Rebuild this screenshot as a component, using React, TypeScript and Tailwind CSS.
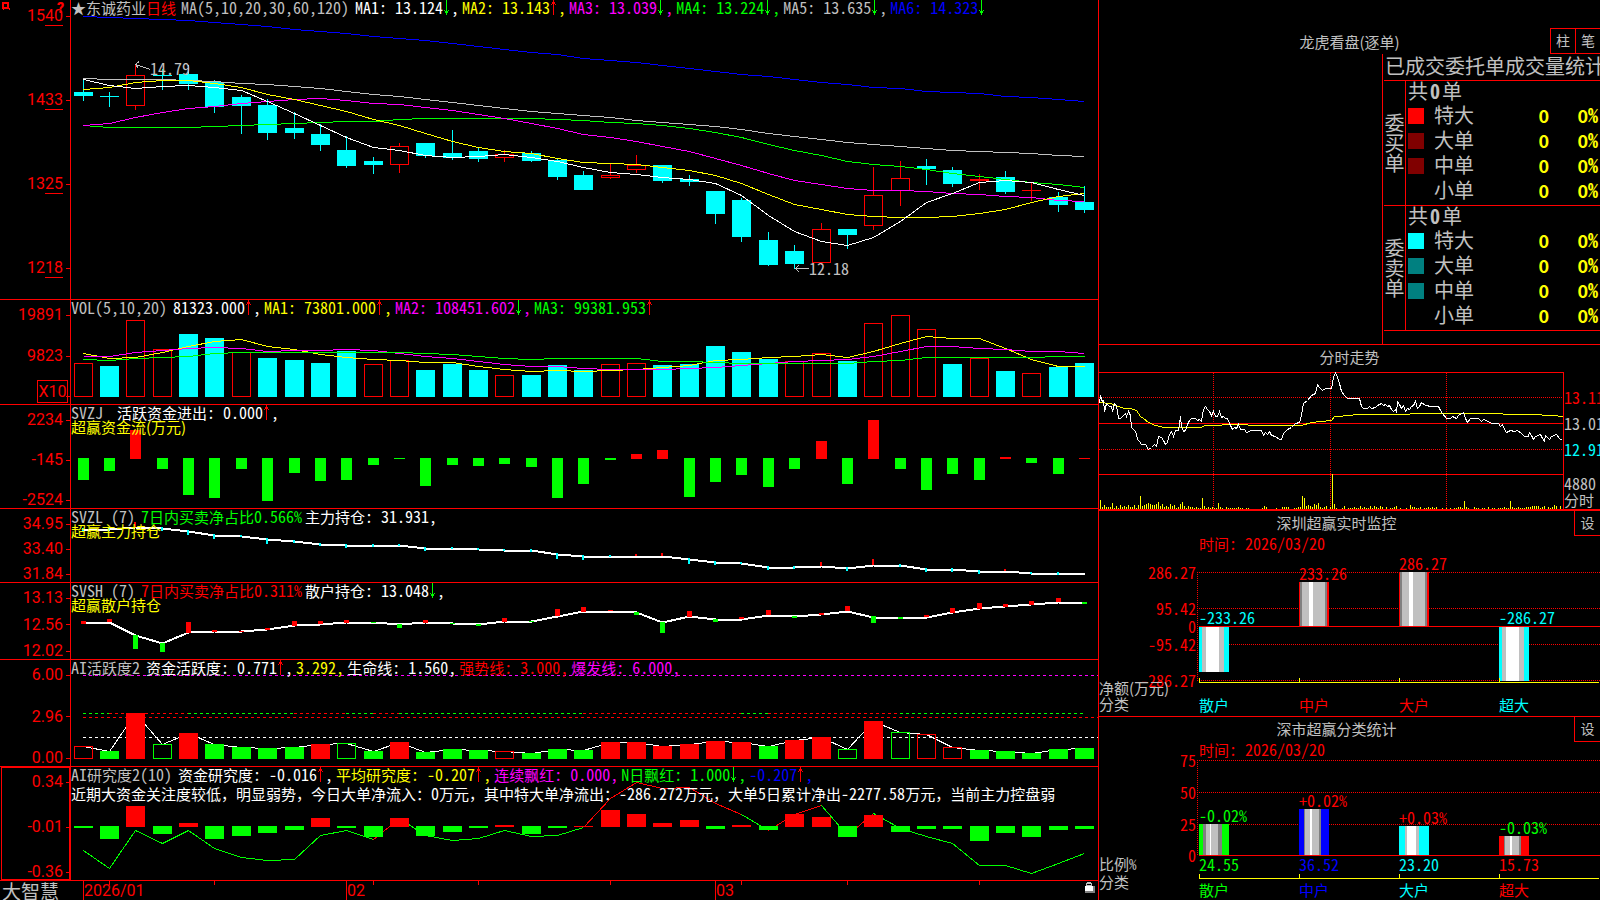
import { Fragment, type ReactNode } from "react";

const RED = "#ff0000";
const GREEN = "#00ff00";
const CYAN = "#00ffff";
const YELLOW = "#ffff00";
const MAGENTA = "#ff00ff";
const BLUE = "#0000ff";
const WHITE = "#ffffff";
const SILVER = "#c0c0c0";
const GRAY = "#808080";

/* ---------- text ---------- */

/* Latin runs use the half-width forms of the CJK font, so that digits stay in fixed cells. */
function Mixed({ text }: { text: string }) {
  return (
    <>
      {text.split(/([\x20-\x7e]+)/).map((part, i) =>
        i % 2 ? (
          <span key={i} className="text-[16px] [font-feature-settings:'hwid']">
            {part}
          </span>
        ) : (
          <Fragment key={i}>{part}</Fragment>
        ),
      )}
    </>
  );
}

function Arrow({ up }: { up: boolean }) {
  return (
    <svg viewBox="0 0 8 15" className="h-[15px] w-[8px] shrink-0" shapeRendering="crispEdges" aria-hidden="true">
      {up ? (
        <path d="M3 0h1v15h-1zM2 2h3v2h-3zM1 4h1v1h-1zM5 4h1v1h-1z" fill={RED} />
      ) : (
        <path d="M3 0h1v15h-1zM2 11h3v2h-3zM1 10h1v1h-1zM5 10h1v1h-1z" fill={GREEN} />
      )}
    </svg>
  );
}

type Reading = { text: string; tone: string; trend?: "up" | "down"; comma?: boolean };

function Readings({ name, items }: { name: ReactNode; items: Reading[] }) {
  return (
    <div className="flex h-[15px] whitespace-pre leading-[15px]">
      <span className="mr-[6px] flex text-[#c0c0c0]">{name}</span>
      {items.map((it, i) => (
        <span key={i} className={`mr-[3px] flex ${it.tone}`}>
          <span>
            <Mixed text={it.text} />
          </span>
          {it.trend && <Arrow up={it.trend === "up"} />}
          {it.comma !== false && <span className="text-[16px] [font-feature-settings:'hwid']">,</span>}
        </span>
      ))}
    </div>
  );
}

/* ---------- chart helpers ---------- */

const COUNT = 39;
const cx = (i: number) => 83 + Math.floor(i * 26.35 + 0.2);
const main = (v: number) => Math.round(v / 3);
const mid = (v: number) => 290 + Math.round(v / 3);
const low = (v: number) => 580 + Math.round(v / 3);

type Scale = (v: number) => number;

function Line({ ys, scale, color, width = 1, start = 0 }: { ys: number[]; scale: Scale; color: string; width?: number; start?: number }) {
  return (
    <polyline
      fill="none"
      stroke={color}
      strokeWidth={width}
      points={ys.map((y, i) => `${cx(i + start) + 0.5},${scale(y) + 0.5}`).join(" ")}
    />
  );
}

function Bar({ i, top, bottom, color, hollow, width = 19 }: { i: number; top: number; bottom: number; color: string; hollow?: boolean; width?: number }) {
  const x = cx(i) - (width - 1) / 2;
  const h = Math.max(1, bottom - top);
  return hollow && h > 2 ? (
    <rect x={x + 0.5} y={top + 0.5} width={width - 1} height={h - 1} fill="none" stroke={color} />
  ) : (
    <rect x={x} y={top} width={width} height={h} fill={color} />
  );
}

const fill = (n: number, v: number) => Array<number>(n).fill(v);

/* high, body top, body bottom, low, rising */
const candles: [number, number, number, number, number][] = [
  [236, 276, 288, 303, 0], [276, 288, 290, 321, 0], [192, 225, 318, 330, 1], [207, 225, 228, 270, 0],
  [195, 222, 252, 270, 0], [240, 246, 321, 339, 0], [285, 291, 318, 402, 0], [297, 315, 399, 420, 0],
  [337, 384, 399, 417, 0], [373, 402, 435, 453, 0], [409, 450, 498, 504, 0], [471, 483, 495, 522, 0],
  [429, 438, 495, 519, 1], [429, 429, 468, 474, 0], [390, 459, 474, 480, 0], [444, 453, 477, 486, 0],
  [450, 462, 474, 486, 1], [453, 459, 483, 486, 0], [477, 480, 531, 540, 0], [513, 525, 570, 570, 0],
  [491, 525, 534, 537, 1], [465, 495, 510, 519, 1], [495, 495, 543, 549, 0], [525, 537, 546, 558, 0],
  [573, 573, 642, 672, 0], [594, 600, 711, 726, 0], [696, 720, 795, 798, 0], [735, 753, 792, 807, 0],
  [669, 687, 789, 795, 1], [687, 687, 705, 747, 0], [501, 585, 678, 690, 1], [483, 534, 573, 618, 1],
  [477, 498, 507, 555, 0], [501, 510, 552, 561, 0], [522, 537, 543, 570, 1], [513, 531, 576, 582, 0],
  [549, 570, 573, 603, 1], [576, 591, 615, 636, 0], [558, 606, 630, 639, 0],
];

const ma5 = [237, 256, 263, 259, 256, 262, 269, 302, 339, 374, 410, 442, 451, 466, 472, 468, 463, 472, 484, 502, 515, 521, 531, 536, 549, 585, 645, 692, 724, 736, 711, 662, 605, 578, 545, 541, 547, 566, 586];
const ma10 = [268, 262, 247, 240, 240, 250, 262, 281, 298, 314, 334, 356, 376, 400, 424, 440, 454, 460, 475, 487, 490, 491, 502, 509, 526, 550, 583, 612, 628, 643, 649, 652, 650, 648, 640, 627, 605, 587, 580];
const ma20 = [375, 368, 352, 336, 323, 317, 309, 303, 296, 295, 299, 308, 313, 321, 331, 342, 355, 368, 383, 402, 412, 424, 439, 454, 474, 494, 519, 539, 553, 565, 571, 571, 574, 578, 583, 588, 592, 600, 604];
const ma30 = [376, 380, 382, 382, 382, 379, 376, 373, 370, 365, 364, 364, 358, 355, 355, 355, 355, 355, 356, 361, 365, 370, 376, 385, 397, 412, 433, 451, 466, 482, 493, 499, 508, 519, 529, 538, 546, 551, 562];
const ma60 = [235, 236, 236, 238, 239, 243, 248, 253, 258, 265, 274, 283, 289, 298, 307, 316, 325, 332, 339, 346, 352, 359, 365, 372, 377, 386, 398, 409, 418, 427, 433, 438, 445, 450, 454, 457, 460, 464, 467];
const ma120 = [49, 52, 55, 58, 61, 67, 72, 77, 86, 92, 100, 109, 114, 121, 130, 137, 147, 155, 163, 173, 181, 187, 196, 205, 214, 223, 229, 238, 247, 253, 260, 265, 272, 277, 280, 287, 292, 297, 304];

const volume = [219, 228, 90, 177, 132, 144, 187, 204, 210, 219, 183, 222, 210, 240, 222, 240, 255, 255, 225, 240, 222, 219, 225, 222, 168, 186, 207, 213, 189, 213, 99, 75, 117, 222, 204, 243, 249, 231, 219];
const volumeUp = new Set([0, 2, 3, 6, 11, 12, 16, 20, 21, 27, 28, 30, 31, 32, 34, 36]);
const vol5 = [190, 203, 200, 187, 169, 154, 148, 169, 178, 193, 202, 208, 211, 217, 217, 229, 236, 244, 241, 244, 241, 236, 231, 225, 211, 206, 202, 199, 193, 202, 184, 158, 139, 145, 145, 173, 208, 229, 229];
const vol10 = [197, 199, 185, 181, 175, 172, 175, 184, 181, 181, 178, 179, 190, 197, 205, 214, 223, 227, 229, 233, 236, 236, 236, 235, 230, 224, 218, 214, 211, 208, 197, 182, 169, 169, 173, 178, 184, 184, 188];
const vol20 = [208, 211, 205, 202, 197, 190, ...fill(7, 187), 189, 191, 197, 204, 206, 205, 205, 205, 205, 214, 214, 217, ...fill(5, 220), 214, 209, ...fill(5, 202), 199, 199];

const flow = [570, 543, 420, 537, 615, 624, 537, 633, 549, 573, 570, 525, 507, 588, 525, 528, 522, 531, 624, 582, 510, 492, 480, 621, 576, 555, 591, 537, 453, 582, 390, 537, 600, 552, 570, 501, 519, 552, 504];

const mainHold = [717, 717, 712, 713, 723, 736, 737, 748, 754, 761, 766, 766, 766, 773, 775, 778, 779, 781, 793, 798, 798, 798, 797, 808, 815, 820, 831, 831, 827, 834, 825, 825, 836, 837, 843, 843, 848, 849, 849];
const mainMarks = [6, 6, -12, 8, 12, 12, 4, 14, 5, 7, 9, 5, 2, 9, 4, 2, 4, 5, 14, 12, 3, -3, -6, 14, 8, 4, 10, 6, -8, 9, -15, 6, 10, 9, 9, -2, 2, 5, 0];

const retailHold = [128, 125, 165, 189, 157, 154, 154, 148, 136, 131, 126, 127, 132, 127, 130, 133, 124, 123, 108, 94, 92, 97, 127, 109, 117, 116, 104, 108, 103, 93, 110, 111, 110, 97, 85, 79, 73, 65, 66];
const retailMarks: [number, number, number][] = [
  [123, 132, 1], [117, 126, 1], [165, 207, 0], [189, 216, 0], [126, 159, 1], [150, 156, 1], [153, 156, 1], [144, 150, 1],
  [123, 138, 1], [123, 132, 1], [120, 129, 1], [126, 129, 0], [132, 144, 0], [120, 129, 1], [129, 132, 0], [132, 138, 0],
  [114, 126, 1], [123, 126, 0], [87, 108, 1], [81, 96, 1], [90, 93, 1], [96, 105, 0], [126, 159, 0], [93, 111, 1],
  [117, 126, 0], [111, 117, 1], [90, 105, 1], [108, 114, 0], [99, 105, 1], [78, 93, 1], [108, 129, 0], [111, 117, 0],
  [105, 111, 1], [84, 99, 1], [69, 87, 1], [72, 81, 1], [63, 75, 1], [54, 66, 1], [66, 72, 0],
];

const active = [499, 513, 399, 492, 459, 492, 501, 504, 501, 492, 490, 513, 486, 516, 507, 510, 514, 519, 507, 510, 486, 486, 498, 492, 483, 486, 498, 480, 471, 508, 423, 457, 463, 502, 510, 513, 519, 507, 504];
const activeUp = new Set([0, 2, 4, 9, 12, 16, 20, 21, 22, 23, 24, 25, 27, 28, 30, 32, 33]);
const activeHollow = new Set([0, 3, 10, 16, 29, 31, 32, 33]);

const study = [744, 777, 678, 762, 729, 777, 768, 759, 750, 714, 744, 771, 714, 768, 756, 744, 735, 762, 744, 738, 690, 702, 729, 720, 747, 735, 750, 702, 711, 771, 705, 756, 747, 747, 783, 759, 771, 750, 747];
const studyUp = new Set([2, 4, 9, 12, 16, 19, 20, 21, 22, 23, 25, 27, 28, 30]);
const studyLine = [810, 865, 751, 788, 751, 804, 831, 841, 837, 764, 751, 778, 714, 764, 781, 775, 751, 768, 764, 742, 655, 606, 624, 621, 668, 702, 750, 703, 676, 764, 700, 745, 768, 790, 856, 856, 878, 850, 820];

/* ---------- left side panes ---------- */

function AxisLabel({ children }: { children: ReactNode }) {
  return (
    <div className="flex h-4 items-center justify-end gap-[3px] leading-4">
      <span>{children}</span>
      <span className="h-px w-1 bg-[#f00]" />
    </div>
  );
}

function Pane({ box, axis, axisClass, header, children }: { box: string; axis: ReactNode; axisClass: string; header: ReactNode; children: ReactNode }) {
  return (
    <section className="grid min-h-0 grid-cols-[71px_minmax(0,1fr)] grid-rows-[minmax(0,1fr)] border-b border-[#f00]">
      <div className={`relative flex flex-col border-r border-[#f00] font-[Roboto,sans-serif] text-[16px] text-[#f00] ${axisClass}`}>{axis}</div>
      <div className="grid grid-cols-[minmax(0,1fr)] grid-rows-[minmax(0,1fr)]">
        <svg className="col-start-1 row-start-1 h-full w-full" viewBox={box} preserveAspectRatio="none" shapeRendering="crispEdges" aria-hidden="true">
          {children}
        </svg>
        <div className="z-10 col-start-1 row-start-1">{header}</div>
      </div>
    </section>
  );
}

function PriceLabel({ head, tail }: { head: string; tail: string }) {
  return (
    <AxisLabel>
      {head}
      <span className="border-b border-[#f00]">{tail}</span>
    </AxisLabel>
  );
}

function PricePane() {
  const seg = (n: string, v: string, tone: string, trend: "up" | "down", comma = true): Reading => ({ text: `${n}: ${v}`, tone, trend, comma });
  return (
    <Pane
      box="71 0 1027 299"
      axisClass="justify-between pt-[8px] pb-[23px]"
      axis={
        <>
          <svg className="absolute top-[2px] left-[2px] h-[8px] w-[8px]" viewBox="0 0 8 8" shapeRendering="crispEdges" aria-hidden="true">
            <path d="M0 0h7v7h-7zM2 2v3h3v-3z" fill={RED} fillRule="evenodd" />
            <path d="M1 7h1v1h-1zM6 6h2v2h-1v-1h-1z" fill={RED} />
          </svg>
          <span className="absolute top-0 left-[57px] text-[14px] leading-4 font-black">?</span>
          <PriceLabel head="15" tail="40" />
          <PriceLabel head="14" tail="33" />
          <PriceLabel head="13" tail="25" />
          <PriceLabel head="12" tail="18" />
        </>
      }
      header={
        <Readings
          name={
            <>
              <span>★东诚药业</span>
              <span className="mr-[5px] text-[#f00]">日线</span>
              <Mixed text="MA(5,10,20,30,60,120)" />
            </>
          }
          items={[
            seg("MA1", "13.124", "text-white", "down"),
            seg("MA2", "13.143", "text-[#ff0]", "up"),
            seg("MA3", "13.039", "text-[#f0f]", "down"),
            seg("MA4", "13.224", "text-[#0f0]", "down"),
            seg("MA5", "13.635", "text-[#c0c0c0]", "down"),
            seg("MA6", "14.323", "text-[#00f]", "down", false),
          ]}
        />
      }
    >
      {candles.map(([hi, top, bottom, lo, up], i) => {
        const color = up ? RED : CYAN;
        return (
          <g key={i}>
            <rect x={cx(i)} y={main(hi)} width={1} height={main(top) - main(hi)} fill={color} />
            <rect x={cx(i)} y={main(bottom)} width={1} height={main(lo) - main(bottom)} fill={color} />
            <Bar i={i} top={main(top)} bottom={main(bottom)} color={color} hollow={!!up} />
          </g>
        );
      })}
      <Line ys={ma120} scale={main} color={BLUE} />
      <Line ys={ma60} scale={main} color={SILVER} />
      <Line ys={ma30} scale={main} color={GREEN} />
      <Line ys={ma20} scale={main} color={MAGENTA} />
      <Line ys={ma10} scale={main} color={YELLOW} />
      <Line ys={ma5} scale={main} color={WHITE} />
      <g fill="none" stroke={SILVER}>
        <path d="M150.5 69.5L135.5 64.5M139 61.5L135.5 64.5L138.5 68.5" />
        <path d="M809 268.5H795M799 265L795.5 268.5L799 272" />
      </g>
      <g fill={SILVER} fontSize={16} className="[font-feature-settings:'hwid']">
        <text x={150} y={75}>14.79</text>
        <text x={809} y={275}>12.18</text>
      </g>
    </Pane>
  );
}

function VolumePane() {
  return (
    <Pane
      box="71 300 1027 104"
      axisClass="pt-[7px]"
      axis={
        <>
          <AxisLabel>19891</AxisLabel>
          <div className="mt-[25px]">
            <AxisLabel>9823</AxisLabel>
          </div>
          <div className="mt-4 mr-[2px] flex h-[23px] w-[31px] items-center justify-center self-end border border-[#f00]">X10</div>
          <span className="absolute right-0 bottom-[7px] h-px w-1 bg-[#f00]" />
        </>
      }
      header={
        <Readings
          name={<Mixed text="VOL(5,10,20)" />}
          items={[
            { text: "81323.000", tone: "text-white", trend: "up" },
            { text: "MA1: 73801.000", tone: "text-[#ff0]", trend: "up" },
            { text: "MA2: 108451.602", tone: "text-[#f0f]", trend: "down" },
            { text: "MA3: 99381.953", tone: "text-[#0f0]", trend: "up", comma: false },
          ]}
        />
      }
    >
      {volume.map((v, i) => (
        <Bar key={i} i={i} top={mid(v)} bottom={397} color={volumeUp.has(i) ? RED : CYAN} hollow={volumeUp.has(i)} />
      ))}
      <Line ys={vol5} scale={mid} color={YELLOW} />
      <Line ys={vol10} scale={mid} color={MAGENTA} />
      <Line ys={vol20} scale={mid} color={GREEN} />
    </Pane>
  );
}

function Caption({ children }: { children: string }) {
  return (
    <div className="-mt-px h-[15px] leading-[15px] text-[#ff0]">
      {children}
    </div>
  );
}

function FlowPane() {
  return (
    <Pane
      box="71 405 1027 103"
      axisClass="justify-between pt-[7px]"
      axis={
        <>
          <AxisLabel>2234</AxisLabel>
          <AxisLabel>-145</AxisLabel>
          <AxisLabel>-2524</AxisLabel>
        </>
      }
      header={
        <>
          <Readings name={<Mixed text="SVZJ " />} items={[{ text: "活跃资金进出: 0.000", tone: "text-white", trend: "up" }]} />
          <Caption>超赢资金流(万元)</Caption>
        </>
      }
    >
      {flow.map((v, i) =>
        v > 504 ? (
          <Bar key={i} i={i} top={458} bottom={mid(v)} color={GREEN} width={11} />
        ) : (
          <Bar key={i} i={i} top={mid(v)} bottom={459} color={RED} width={11} />
        ),
      )}
    </Pane>
  );
}

function MainHoldPane() {
  return (
    <Pane
      box="71 509 1027 73"
      axisClass="justify-between pt-[7px]"
      axis={
        <>
          <AxisLabel>34.95</AxisLabel>
          <AxisLabel>33.40</AxisLabel>
          <AxisLabel>31.84</AxisLabel>
        </>
      }
      header={
        <>
          <Readings
            name={<Mixed text="SVZL (7)" />}
            items={[
              { text: "7日内买卖净占比0.566%", tone: "text-[#0f0]", comma: false },
              { text: "主力持仓: 31.931", tone: "text-white" },
            ]}
          />
          <Caption>超赢主力持仓</Caption>
        </>
      }
    >
      <Line ys={mainHold} scale={mid} color={WHITE} width={2} />
      {mainMarks.map((m, i) => {
        const y = mid(mainHold[i]) - 1;
        const h = Math.round(Math.abs(m) / 3) + 1;
        return m ? <rect key={i} x={cx(i) - 1} y={m > 0 ? y : y - h + 1} width={2} height={h} fill={m > 0 ? CYAN : RED} /> : null;
      })}
    </Pane>
  );
}

function RetailHoldPane() {
  return (
    <Pane
      box="71 583 1027 76"
      axisClass="justify-between pt-[7px]"
      axis={
        <>
          <AxisLabel>13.13</AxisLabel>
          <AxisLabel>12.56</AxisLabel>
          <AxisLabel>12.02</AxisLabel>
        </>
      }
      header={
        <>
          <Readings
            name={<Mixed text="SVSH (7)" />}
            items={[
              { text: "7日内买卖净占比0.311%", tone: "text-[#f00]", comma: false },
              { text: "散户持仓: 13.048", tone: "text-white", trend: "down" },
            ]}
          />
          <Caption>超赢散户持仓</Caption>
        </>
      }
    >
      <Line ys={retailHold} scale={low} color={WHITE} width={2} />
      {retailMarks.map(([top, bottom, up], i) => (
        <Bar key={i} i={i} top={low(top)} bottom={low(bottom)} color={up ? RED : GREEN} width={5} />
      ))}
    </Pane>
  );
}

function ActivePane() {
  const redRuns: [number, number][] = [[1, 4], [8, 10], [11, 12], [19, 25], [26, 31]];
  const greenRuns: [number, number][] = [[0, 1], [4, 8], [10, 11], [12, 19], [25, 26], [31, 38]];
  return (
    <Pane
      box="71 660 1027 106"
      axisClass="justify-between pt-[7px]"
      axis={
        <>
          <AxisLabel>6.00</AxisLabel>
          <AxisLabel>2.96</AxisLabel>
          <AxisLabel>0.00</AxisLabel>
        </>
      }
      header={
        <Readings
          name={
            <span>
              <Mixed text="AI活跃度2" />
            </span>
          }
          items={[
            { text: "资金活跃度: 0.771", tone: "text-white", trend: "up" },
            { text: "3.292", tone: "text-[#ff0]" },
            { text: "生命线: 1.560", tone: "text-white" },
            { text: "强势线: 3.000", tone: "text-[#f00]" },
            { text: "爆发线: 6.000", tone: "text-[#f0f]" },
          ]}
        />
      }
    >
      <g strokeDasharray="3 3">
        <path d="M83 675.5H1098" stroke={MAGENTA} />
        <path d="M83 717.5H1098" stroke={RED} />
        <path d="M83 737.5H1098" stroke={WHITE} />
        {redRuns.map(([a, b]) => (
          <path key={a} d={`M${cx(a)} 713.5H${cx(b)}`} stroke={RED} />
        ))}
        {greenRuns.map(([a, b]) => (
          <path key={a} d={`M${cx(a)} 713.5H${cx(b)}`} stroke={GREEN} />
        ))}
      </g>
      <Line ys={active} scale={low} color={WHITE} />
      {active.map((v, i) => (
        <Bar key={i} i={i} top={low(v)} bottom={759} color={activeUp.has(i) ? RED : GREEN} hollow={activeHollow.has(i)} />
      ))}
    </Pane>
  );
}

function StudyPane() {
  const runs: [number, number, string][] = [
    [0, 11, GREEN], [11, 12, RED], [12, 19, GREEN], [19, 25, RED], [25, 26, GREEN],
    [26, 28, RED], [28, 29, GREEN], [29, 30, RED], [30, COUNT - 1, GREEN],
  ];
  return (
    <Pane
      box="71 767 1027 113"
      axisClass="justify-between pt-[7px] ml-px ring-1 ring-inset ring-[#f00]"
      axis={
        <>
          <AxisLabel>0.34</AxisLabel>
          <AxisLabel>-0.01</AxisLabel>
          <AxisLabel>-0.36</AxisLabel>
        </>
      }
      header={
        <>
          <Readings
            name={
              <span>
                <Mixed text="AI研究度2(10)" />
              </span>
            }
            items={[
              { text: "资金研究度: -0.016", tone: "text-white", trend: "up" },
              { text: "平均研究度: -0.207", tone: "text-[#ff0]", trend: "up" },
              { text: "连续飘红: 0.000", tone: "text-[#f0f]" },
              { text: "N日飘红: 1.000", tone: "text-[#0f0]", trend: "down" },
              { text: "-0.207", tone: "text-[#00f]", trend: "up" },
            ]}
          />
          <p className="mt-1 h-[15px] leading-[15px] whitespace-nowrap text-white">
            <Mixed text="近期大资金关注度较低，明显弱势，今日大单净流入：0万元，其中特大单净流出：-286.272万元，大单5日累计净出-2277.58万元，当前主力控盘弱" />
          </p>
        </>
      }
    >
      {runs.map(([a, b, color]) => (
        <Line key={a} ys={studyLine.slice(a, b + 1)} start={a} scale={low} color={color} />
      ))}
      {study.map((v, i) =>
        studyUp.has(i) ? (
          <Bar key={i} i={i} top={low(v)} bottom={827} color={RED} />
        ) : (
          <Bar key={i} i={i} top={826} bottom={low(v)} color={GREEN} />
        ),
      )}
    </Pane>
  );
}

function TimeAxis() {
  return (
    <footer className="grid min-h-0 grid-cols-[71px_minmax(0,1fr)]">
      <span className="pl-[2px] text-[19px] leading-[19px] whitespace-nowrap text-[#c0c0c0]">大智慧</span>
      <svg className="h-full w-full" viewBox="71 881 1027 19" preserveAspectRatio="none" shapeRendering="crispEdges" role="img" aria-label="日期">
        {[0, 10, 24].map((i) => (
          <rect key={i} x={cx(i)} y={881} width={1} height={19} fill={RED} />
        ))}
        {[1, 5, 11, 15, 20, 25, 29, 34].map((i) => (
          <rect key={i} x={cx(i)} y={881} width={1} height={4} fill={RED} />
        ))}
        <g fill={RED} className="font-[Roboto,sans-serif] text-[16px]">
          <text x={84} y={896}>2026/01</text>
          <text x={347} y={896}>02</text>
          <text x={716} y={896}>03</text>
        </g>
        <path d="M1086 883h1v-1h4v1h1v3h-6z" fill={SILVER} />
        <path d="M1087 884h4v1h-4z" fill="#000" />
        <path d="M1085 886h10v7h-10z" fill={GRAY} />
        <path d="M1085 886h8v5h-8z" fill={WHITE} />
      </svg>
    </footer>
  );
}

/* ---------- right side ---------- */

type Side = { side: string; swatches: string[] };

const sides: Side[] = [
  { side: "委买单", swatches: ["bg-[#f00]", "bg-[#800000]", "bg-[#800000]", ""] },
  { side: "委卖单", swatches: ["bg-[#0ff]", "bg-[#008080]", "bg-[#008080]", ""] },
];
const sizes = ["特大", "大单", "中单", "小单"];

function OrderStats() {
  return (
    <section className="flex min-h-0 flex-col overflow-hidden border-b border-[#f00] text-[#c0c0c0]">
      <header className="grid h-[54px] shrink-0 grid-cols-[1fr_auto_1fr] items-end">
        <h2 className="col-start-2 mb-[5px] h-[15px] leading-[15px]">龙虎看盘(逐单)</h2>
        <div className="flex justify-end">
          <button type="button" className="h-[26px] w-[25px] border border-r-0 border-[#f00] pb-[2px] text-[14px]">柱</button>
          <button type="button" className="h-[26px] w-[25px] border border-r-0 border-[#f00] pb-[2px] text-[14px]">笔</button>
        </div>
      </header>
      <div className="flex min-h-0 flex-1 justify-end">
        <div className="w-[218px] overflow-hidden border-l border-[#f00] text-[20px] leading-[20px]">
          <h3 className="h-[26px] pt-[2px] pl-[2px] leading-[20px] whitespace-nowrap">已成交委托单成交量统计</h3>
          <table className="ml-px w-[216px] table-fixed border-separate border-spacing-0 border-b border-[#f00]">
            <colgroup>
              <col className="w-[22px]" />
              <col className="w-[28px]" />
              <col className="w-[42px]" />
              <col className="w-[75px]" />
              <col className="w-[49px]" />
            </colgroup>
            {sides.map(({ side, swatches }) => (
              <tbody key={side}>
                <tr>
                  <th rowSpan={5} scope="rowgroup" className="border-t border-r border-[#f00] p-0 font-normal">
                    {[...side].map((c) => (
                      <span key={c} className="block">{c}</span>
                    ))}
                  </th>
                  <td colSpan={4} className="h-[25px] border-t border-[#f00] p-0 pl-[2px] align-top">
                    共<span className="mx-[2px] font-bold [font-feature-settings:'hwid']">0</span>单
                  </td>
                </tr>
                {sizes.map((s, i) => (
                  <tr key={s} className="align-top">
                    <td className="h-[25px] p-0 pt-[3px] pl-[2px]">
                      <span className={`block size-4 ${swatches[i]}`} />
                    </td>
                    <td className="p-0 whitespace-nowrap">{s}</td>
                    <td className="p-0 pr-[2px] text-right text-[18px] font-bold text-[#ff0]">0</td>
                    <td className="p-0 pr-[2px] text-right font-bold text-[#ff0]">
                      <span className="text-[18px]">0</span>
                      <span className="text-[20px] [font-feature-settings:'hwid']">%</span>
                    </td>
                  </tr>
                ))}
              </tbody>
            ))}
          </table>
        </div>
      </div>
    </section>
  );
}

const priceTrace =
  "3,190 7,166 10,178 13,184 16,180 19,214 25,190 34,200 40,200 43,214 49,190 55,196 61,236 67,236 73,228 82,220 85,230 91,214 97,226 100,262 109,272 115,280 118,298 124,304 130,314 142,314 151,328 160,322 169,314 175,318 181,290 190,292 196,300 202,312 208,308 214,284 220,274 226,290 232,270 241,270 247,230 250,258 256,274 262,270 268,254 274,240 280,236 292,236 298,242 304,238 310,244 316,208 322,198 328,208 334,214 340,226 346,214 352,230 358,228 364,214 370,232 376,230 382,236 388,236 394,250 403,268 409,262 415,264 421,252 427,268 439,268 445,276 460,270 478,272 490,270 496,286 502,276 508,282 514,274 520,286 532,290 544,298 550,298 556,280 568,268 580,262 592,250 604,248 610,226 616,190 628,180 640,166 652,160 658,132 664,142 672,152 682,146 700,146 706,112 712,98 718,112 724,130 730,154 740,166 748,176 784,176 790,198 796,206 808,206 814,200 820,204 832,202 838,196 850,190 856,196 862,192 868,200 874,196 880,208 886,214 892,208 895,216 898,184 904,192 910,206 916,196 922,214 928,204 934,208 940,198 946,196 952,184 958,206 964,198 970,186 982,196 1000,200 1020,200 1026,210 1034,220 1044,236 1056,236 1062,230 1076,236 1082,226 1096,216 1102,236 1108,246 1116,236 1140,236 1150,244 1156,238 1170,244 1180,250 1200,250 1208,258 1214,252 1218,268 1226,276 1238,270 1250,274 1258,270 1270,280 1278,290 1290,288 1294,276 1300,286 1306,298 1312,288 1326,284 1332,296 1338,304 1342,286 1354,298 1360,290 1376,284 1384,296 1394,302";
const averageTrace =
  "3,188 36,190 60,198 78,204 96,206 115,212 126,228 136,236 150,246 172,256 200,262 310,262 320,257 366,256 376,253 440,253 460,257 610,257 640,248 700,241 708,228 760,226 770,223 930,223 940,220 1210,220 1220,223 1300,224 1360,227 1396,230";
const at = (trace: string) =>
  trace
    .split(" ")
    .map((p) => {
      const [x, y] = p.split(",").map(Number);
      return `${Math.floor(1098 + x / 3) + 0.5},${Math.floor(340 + y / 3) + 0.5}`;
    })
    .join(" ");

const ticks = [
  9, 2, 4, 2, 2, 2, 6, 1, 3, 1, 4, 2, 3, 2, 4, 2, 2, 4, 1, 4, 13, 3, 4, 5, 6, 5, 4, 4, 5, 7, 3, 5, 2, 3, 2, 5, 3, 4, 1, 2,
  5, 7, 3, 1, 3, 2, 2, 1, 2, 1, 1, 11, 3, 1, 2, 1, 2, 1, 1, 6, 2, 1, 0, 2, 1, 1, 1, 1, 1, 2, 1, 1, 0, 1, 1, 0, 0, 0, 0, 0,
  0, 1, 3, 2, 0, 0, 0, 0, 1, 0, 0, 2, 2, 2, 2, 0, 0, 1, 1, 2, 2, 13, 11, 3, 4, 3, 2, 5, 4, 6, 2, 1, 2, 3, 0, 2, 35, 5, 1, 0,
  0, 1, 3, 0, 1, 1, 1, 2, 1, 1, 3, 1, 2, 1, 1, 3, 1, 3, 2, 1, 3, 2, 0, 2, 0, 1, 1, 2, 3, 0, 1, 0, 0, 1, 0, 4, 2, 2, 1, 1,
  2, 0, 1, 1, 2, 1, 2, 1, 2, 0, 0, 1, 0, 1, 0, 1, 0, 1, 1, 2, 2, 1, 8, 2, 1, 0, 0, 2, 1, 1, 0, 1, 1, 0, 2, 0, 1, 1, 0, 1,
  1, 1, 2, 1, 1, 8, 2, 1, 1, 2, 1, 1, 1, 2, 2, 2, 3, 3, 3, 3, 1, 2, 3, 0, 2, 1, 2, 4, 3, 0, 3,
];

function Intraday() {
  return (
    <section className="flex min-h-0 flex-col border-b-2 border-[#f00]">
      <h2 className="h-[27px] shrink-0 pt-[4px] text-center leading-[15px] text-[#c0c0c0]">分时走势</h2>
      <svg className="min-h-0 w-full flex-1" viewBox="1099 372 501 137" preserveAspectRatio="none" shapeRendering="crispEdges" role="img" aria-label="分时走势">
        <path d="M1099 372.5H1563.5V509M1099 423.5H1563M1099 474.5H1563" fill="none" stroke={RED} />
        <path d="M1099 397.5H1563M1099 449.5H1563M1213.5 373V509M1330.5 373V509M1446.5 373V509" fill="none" stroke={RED} strokeDasharray="1 1" />
        {ticks.map((h, i) => (h ? <rect key={i} x={1100 + i * 2} y={509 - h} width={1} height={h} fill={YELLOW} /> : null))}
        <polyline points={at(averageTrace)} fill="none" stroke={YELLOW} />
        <polyline points={at(priceTrace)} fill="none" stroke={WHITE} />
        <g fontSize={16} className="[font-feature-settings:'hwid']">
          <text x={1564} y={404} fill={RED}>13.11</text>
          <text x={1564} y={430} fill={SILVER}>13.01</text>
          <text x={1564} y={456} fill={CYAN}>12.91</text>
          <text x={1564} y={490} fill={SILVER}>4880</text>
        </g>
        <text x={1564} y={506} fontSize={15} fill={SILVER}>分时</text>
      </svg>
    </section>
  );
}

type Column = { label: string; tone: string; top: number; bottom: number; stripes: [number, string][]; value: string; valueTone: string; valueY: number };

function Columns({ columns, labelY }: { columns: Column[]; labelY: number }) {
  return (
    <>
      {columns.map((c, i) => {
        let x = 1199 + i * 100;
        return (
          <g key={c.label}>
            {c.stripes.map(([w, color], k) => {
              const r = <rect key={k} x={x} y={c.top} width={w} height={c.bottom - c.top} fill={color} />;
              x += w;
              return r;
            })}
            <text x={1199 + i * 100} y={c.valueY} fontSize={16} fill={c.valueTone} className="[font-feature-settings:'hwid']">
              {c.value}
            </text>
            <text x={1199 + i * 100} y={labelY} fontSize={15} fill={c.tone}>
              {c.label}
            </text>
          </g>
        );
      })}
    </>
  );
}

function Monitor({ title, box, last, children }: { title: string; box: string; last?: boolean; children: ReactNode }) {
  return (
    <section className={`flex min-h-0 flex-col ${last ? "" : "border-b border-[#f00]"}`}>
      <header className="flex h-[25px] shrink-0">
        <h2 className="flex-1 pt-[4px] text-center leading-[15px] text-[#c0c0c0]">{title}</h2>
        <button type="button" className="w-[26px] border-b border-l border-[#f00] pb-[2px] text-[14px] leading-[20px] text-[#c0c0c0]">设</button>
      </header>
      <p className="h-[15px] shrink-0 pl-[100px] leading-[15px] whitespace-pre text-[#f00]">
        <Mixed text="时间: 2026/03/20" />
      </p>
      <svg className="min-h-0 w-full flex-1 overflow-visible" viewBox={box} preserveAspectRatio="none" shapeRendering="crispEdges" role="img" aria-label={title}>
        {children}
      </svg>
    </section>
  );
}

const cyanPipe: [number, string][] = [[3, CYAN], [4, SILVER], [13, WHITE], [5, SILVER], [5, CYAN]];
const redPipe: [number, string][] = [[1, RED], [2, GRAY], [7, SILVER], [4, WHITE], [12, SILVER], [2, GRAY], [2, RED]];
const thickPipe = (c: string): [number, string][] => [[5, c], [1, GRAY], [5, SILVER], [2, WHITE], [7, SILVER], [2, GRAY], [8, c]];

function NetMonitor() {
  return (
    <Monitor title="深圳超赢实时监控" box="1099 551 501 165">
      <path d="M1199 572.5H1600M1199 608.5H1600M1199 644.5H1600M1199 680.5H1600M1197.5 572V681" fill="none" stroke={RED} strokeDasharray="1 1" />
      <path d="M1199 626.5H1600" stroke={RED} />
      <g fill={RED} fontSize={16} textAnchor="end" className="[font-feature-settings:'hwid']">
        <text x={1196} y={579}>286.27</text>
        <text x={1196} y={615}>95.42</text>
        <text x={1196} y={633}>0</text>
        <text x={1196} y={651}>-95.42</text>
        <text x={1196} y={687}>-286.27</text>
      </g>
      <Columns
        labelY={711}
        columns={[
          { label: "散户", tone: CYAN, top: 627, bottom: 672, stripes: cyanPipe, value: "-233.26", valueTone: CYAN, valueY: 624 },
          { label: "中户", tone: RED, top: 582, bottom: 626, stripes: redPipe, value: "233.26", valueTone: RED, valueY: 580 },
          { label: "大户", tone: RED, top: 572, bottom: 626, stripes: redPipe, value: "286.27", valueTone: RED, valueY: 570 },
          { label: "超大", tone: CYAN, top: 627, bottom: 681, stripes: cyanPipe, value: "-286.27", valueTone: CYAN, valueY: 624 },
        ]}
      />
      <path d="M1199.5 678V682.5H1599M1299.5 678V682M1399.5 678V682M1499.5 678V682" fill="none" stroke={YELLOW} />
      <g fill={SILVER} fontSize={15}>
        <text x={1099} y={694}>净额(万元)</text>
        <text x={1099} y={710}>分类</text>
      </g>
    </Monitor>
  );
}

function ShareMonitor() {
  return (
    <Monitor title="深市超赢分类统计" box="1099 757 501 143" last>
      <path d="M1199 760.5H1600M1199 792.5H1600M1199 824.5H1600M1197.5 760V855" fill="none" stroke={RED} strokeDasharray="1 1" />
      <path d="M1199 855.5H1600" stroke={RED} />
      <g fill={RED} fontSize={16} textAnchor="end" className="[font-feature-settings:'hwid']">
        <text x={1196} y={767}>75</text>
        <text x={1196} y={799}>50</text>
        <text x={1196} y={831}>25</text>
        <text x={1196} y={862}>0</text>
      </g>
      <Columns
        labelY={896}
        columns={[
          { label: "散户", tone: GREEN, top: 824, bottom: 855, stripes: [[4, GREEN], [3, GRAY], [4, SILVER], [1, WHITE], [7, SILVER], [4, GRAY], [7, GREEN]], value: "-0.02%", valueTone: GREEN, valueY: 822 },
          { label: "中户", tone: BLUE, top: 809, bottom: 855, stripes: thickPipe(BLUE), value: "+0.02%", valueTone: RED, valueY: 807 },
          { label: "大户", tone: CYAN, top: 826, bottom: 855, stripes: [[6, CYAN], [2, SILVER], [9, WHITE], [3, SILVER], [10, CYAN]], value: "+0.03%", valueTone: RED, valueY: 824 },
          { label: "超大", tone: RED, top: 836, bottom: 855, stripes: thickPipe(RED), value: "-0.03%", valueTone: GREEN, valueY: 834 },
        ]}
      />
      <g fontSize={16} className="[font-feature-settings:'hwid']">
        <text x={1199} y={871} fill={GREEN}>24.55</text>
        <text x={1299} y={871} fill={BLUE}>36.52</text>
        <text x={1399} y={871} fill={CYAN}>23.20</text>
        <text x={1499} y={871} fill={RED}>15.73</text>
      </g>
      <path d="M1199.5 874V878.5H1599M1299.5 874V878M1399.5 874V878M1499.5 874V878" fill="none" stroke={YELLOW} />
      <g fill={SILVER} fontSize={15} className="[font-feature-settings:'hwid']">
        <text x={1099} y={870}>比例%</text>
        <text x={1099} y={888}>分类</text>
      </g>
    </Monitor>
  );
}

export default function App() {
  return (
    <div className="grid h-screen grid-cols-[1098fr_502fr] grid-rows-[minmax(0,1fr)] overflow-hidden bg-black font-['Noto_Sans_CJK_SC',sans-serif] text-[15px] leading-[15px]">
      <main className="grid min-w-0 grid-rows-[300fr_105fr_104fr_74fr_77fr_107fr_114fr_19fr]">
        <PricePane />
        <VolumePane />
        <FlowPane />
        <MainHoldPane />
        <RetailHoldPane />
        <ActivePane />
        <StudyPane />
        <TimeAxis />
      </main>
      <aside className="grid min-w-0 grid-rows-[345fr_166fr_206fr_183fr] border-l border-[#f00]">
        <OrderStats />
        <Intraday />
        <NetMonitor />
        <ShareMonitor />
      </aside>
    </div>
  );
}
